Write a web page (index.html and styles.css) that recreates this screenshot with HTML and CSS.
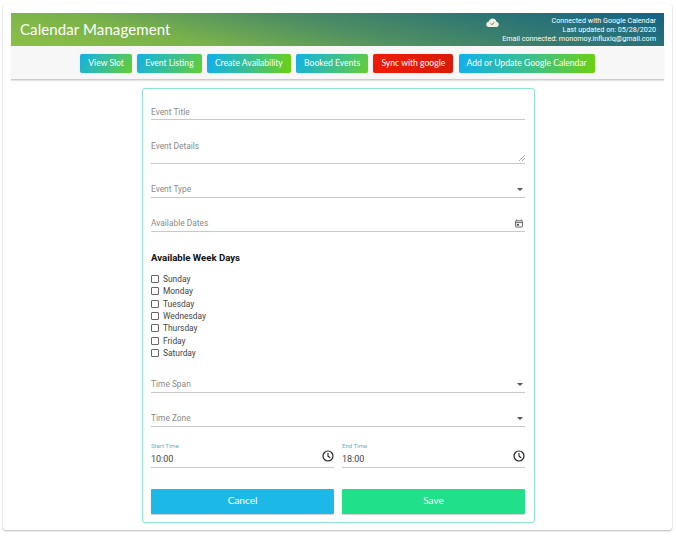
FILE: index.html
```html
<!DOCTYPE html>
<html lang="en">
<head>
<meta charset="utf-8">
<title>Calendar Management</title>
<link rel="stylesheet" href="styles.css">
</head>
<body>
<main class="page">
  <header class="banner">
    <h1 class="title">Calendar Management</h1>
    <div class="status">
      <svg class="cloud" width="13" height="9" viewBox="0 0 14 10"><path d="M3.2 10C1.400 10 0 8.700 0 7.100c0-1.500 1.100-2.700 2.700-2.900C3.200 2.200 4.900.6 7 .6c2.200 0 3.900 1.400 4.300 3.500C12.900 4.300 14 5.500 14 7.100 14 8.700 12.700 10 11 10z" fill="#f4f1de"/><path d="M5 6l1.400 1.400L9 4.900" fill="none" stroke="#4a7a55" stroke-width="1.100"/></svg>
      <div class="status-text">
        <div>Connected with Google Calendar</div>
        <div>Last updated on: 05/28/2020</div>
        <div>Email connected: monomoy.influxiq@gmail.com</div>
      </div>
    </div>
  </header>
  <nav class="toolbar">
    <a class="btn btn-a">View Slot</a>
    <a class="btn btn-a">Event Listing</a>
    <a class="btn btn-b">Create Availability</a>
    <a class="btn btn-a">Booked Events</a>
    <a class="btn btn-red">Sync with google</a>
    <a class="btn btn-b">Add or Update Google Calendar</a>
  </nav>
  <form class="card">
    <div class="field f-title"><span class="ph">Event Title</span></div>
    <div class="field f-details"><span class="ph">Event Details</span>
      <svg class="resize" width="6" height="6" viewBox="0 0 6 6"><path d="M0 6L6 0M3 6L6 3" stroke="#aaa" stroke-width="1"/></svg>
    </div>
    <div class="field f-next"><span class="ph">Event Type</span><i class="caret"></i></div>
    <div class="field f-next"><span class="ph">Available Dates</span>
      <svg class="date" width="8" height="9" viewBox="0 0 9 9"><path d="M2 0v1.500M7 0v1.500" stroke="#555" stroke-width="1"/><rect x=".5" y="1.500" width="8" height="7" rx=".6" fill="none" stroke="#555"/><path d="M.5 3.500h8" stroke="#555"/><rect x="2" y="5" width="2.500" height="2" fill="#555"/></svg>
    </div>
    <h2 class="days-title">Available Week Days</h2>
    <ul class="days">
      <li class="day"><i class="box"></i>Sunday</li>
      <li class="day"><i class="box"></i>Monday</li>
      <li class="day"><i class="box"></i>Tuesday</li>
      <li class="day"><i class="box"></i>Wednesday</li>
      <li class="day"><i class="box"></i>Thursday</li>
      <li class="day"><i class="box"></i>Friday</li>
      <li class="day"><i class="box"></i>Saturday</li>
    </ul>
    <div class="field f-span"><span class="ph">Time Span</span><i class="caret"></i></div>
    <div class="field f-next"><span class="ph">Time Zone</span><i class="caret"></i></div>
    <div class="row times">
      <div class="time">
        <label class="time-label">Start Time</label>
        <span class="time-value">10:00</span>
        <svg class="clock" width="12" height="12" viewBox="0 0 12 12"><circle cx="6" cy="6" r="5" fill="none" stroke="#222" stroke-width="1.200"/><path d="M6 3v3.200l2.200 1.500" fill="none" stroke="#222" stroke-width="1.100"/></svg>
      </div>
      <div class="time">
        <label class="time-label">End Time</label>
        <span class="time-value">18:00</span>
        <svg class="clock" width="12" height="12" viewBox="0 0 12 12"><circle cx="6" cy="6" r="5" fill="none" stroke="#222" stroke-width="1.200"/><path d="M6 3v3.200l2.200 1.500" fill="none" stroke="#222" stroke-width="1.100"/></svg>
      </div>
    </div>
    <div class="row actions">
      <button type="button" class="action cancel">Cancel</button>
      <button type="button" class="action save">Save</button>
    </div>
  </form>
</main>
</body>
</html>
```
FILE: styles.css
```css
* { box-sizing: border-box; }
html, body { margin: 0; padding: 0; background: #fff; }
body { width: 676px; height: 536px; overflow: hidden; padding: 4px 4px 6px 3px; font-family: Roboto, sans-serif; }
.page {
  width: 669px; height: 526px; padding: 9px 8px 0 8px; background: #fff;
  border-radius: 3px;
  box-shadow: 0 1px 2px rgba(0,0,0,.28), 0 0 1px rgba(0,0,0,.05);
}
.banner {
  height: 33px; display: flex; justify-content: space-between; align-items: center;
  padding: 0 8px 0 9px; color: #fff;
  background: linear-gradient(12deg, #8cc044 0%, #7ab24b 25%, #4f8f62 50%, #357b70 70%, #136285 100%);
}
.title { margin: 0 0 2px; font: 400 15px/20px Lato, sans-serif; letter-spacing: .1px; }
.status { display: flex; align-items: flex-start; gap: 3px; }
.cloud { margin-top: 2px; }
.status-text { font: 400 7.2px/9.2px Roboto, sans-serif; text-align: right; white-space: nowrap; }
.toolbar {
  height: 34px; display: flex; justify-content: center; gap: 5.3px; padding: 8px 0 0 0;
  background: #f7f7f7; border-bottom: 1px solid #ccc;
  box-shadow: 0 1px 1px rgba(0,0,0,.1);
}
.btn {
  height: 19px; padding: 0 8px; border-radius: 2px; color: #fff;
  font: 400 8.6px/18px Lato, sans-serif; white-space: nowrap;
  box-shadow: 0 0 1px rgba(0,0,0,.25);
}
.btn-a { background: linear-gradient(120deg, #11b1e6 0%, #4cc470 70%, #65cf2c 100%); }
.btn-b { background: linear-gradient(100deg, #10b0ee 0%, #3fc087 55%, #6fd010 100%); }
.btn-red { background: linear-gradient(100deg, #f01a08, #d81c08); }
.card {
  width: 393px; height: 435px; margin: 8px 0 0 131px; padding: 0 9px 0 8px;
  border: 1px solid #8fe3d0; border-radius: 3px;
  box-shadow: 0 0 1px #8fe3d0;
}
.field {
  position: relative; height: 21px; border-bottom: 1px solid #c9c9c9;
  display: flex; align-items: flex-end; justify-content: space-between; padding-bottom: 2px;
}
.ph { font-size: 8.4px; line-height: 11px; color: #8a8a8a; }
.caret { margin-bottom: 4px; margin-right: 2px; }
.f-title { margin-top: 10px; padding-bottom: 1px; }
.f-details { margin-top: 9px; height: 35px; align-items: flex-start; padding-top: 12px; }
.f-next { margin-top: 13px; }
.f-span { margin-top: 13px; }
.resize { position: absolute; right: 0; bottom: 2px; }
.caret { width: 0; height: 0; border: 3px solid transparent; border-top: 3.5px solid #555; border-bottom: 0; }
.date { margin-right: 2px; margin-bottom: 1px; }
.days-title { margin: 20px 0 0; font: 700 9.6px/12px Roboto, sans-serif; color: #111; }
.days { list-style: none; margin: 9px 0 0; padding: 0; }
.day {
  height: 12.3px; display: flex; align-items: center; gap: 4px;
  font-size: 8.4px; color: #444;
}
.box { width: 8px; height: 8px; border: 1px solid #666; border-radius: 1px; }
.row { display: flex; gap: 8px; }
.times { margin-top: 16px; }
.time { position: relative; flex: 1; height: 25px; border-bottom: 1px solid #c9c9c9; }
.time-label { display: block; font-size: 6px; line-height: 8px; color: #5eb2cc; height: 8px; margin-top: -1px; }
.time-value { display: block; margin-top: 3px; font-size: 9px; line-height: 12px; color: #444; }
.clock { position: absolute; right: 0; top: 7px; }
.actions { margin-top: 21px; }
.action {
  flex: 1; height: 25px; border: 0; border-radius: 1px; color: #fff; padding: 0 0 2px;
  font: 400 10px/23px Lato, sans-serif; box-shadow: 0 1px 1px rgba(0,0,0,.2);
}
.cancel { background: #1cb9e8; }
.save { background: #20e08a; }
```
